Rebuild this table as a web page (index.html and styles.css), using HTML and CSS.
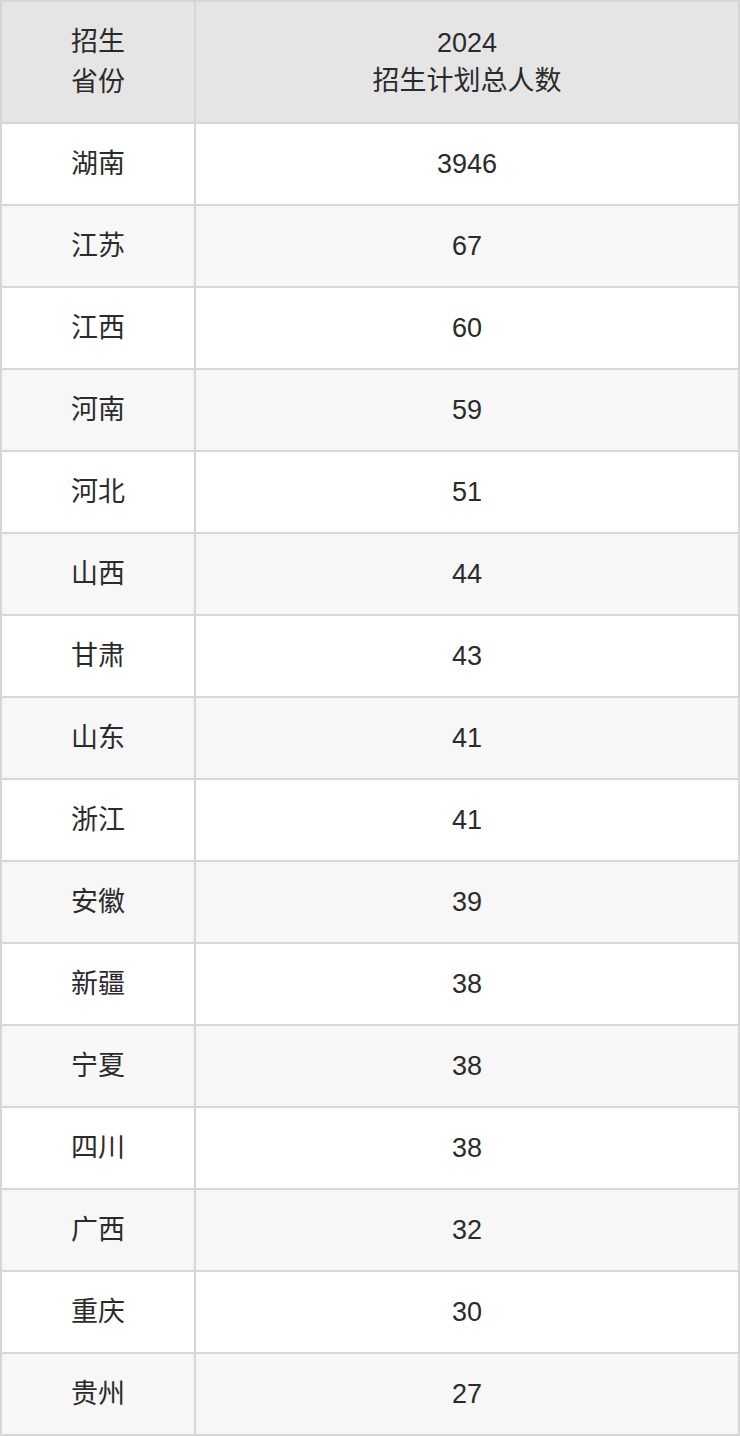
FILE: index.html
```html
<!DOCTYPE html>
<html lang="zh-CN">
<head>
<meta charset="utf-8">
<title>招生计划</title>
<link rel="stylesheet" href="styles.css">
</head>
<body>
<table class="plan">
  <thead>
    <tr><th class="prov">招生<br>省份</th><th class="num">2024<br>招生计划总人数</th></tr>
  </thead>
  <tbody>
    <tr><td>湖南</td><td>3946</td></tr>
    <tr><td>江苏</td><td>67</td></tr>
    <tr><td>江西</td><td>60</td></tr>
    <tr><td>河南</td><td>59</td></tr>
    <tr><td>河北</td><td>51</td></tr>
    <tr><td>山西</td><td>44</td></tr>
    <tr><td>甘肃</td><td>43</td></tr>
    <tr><td>山东</td><td>41</td></tr>
    <tr><td>浙江</td><td>41</td></tr>
    <tr><td>安徽</td><td>39</td></tr>
    <tr><td>新疆</td><td>38</td></tr>
    <tr><td>宁夏</td><td>38</td></tr>
    <tr><td>四川</td><td>38</td></tr>
    <tr><td>广西</td><td>32</td></tr>
    <tr><td>重庆</td><td>30</td></tr>
    <tr><td>贵州</td><td>27</td></tr>
  </tbody>
</table>
</body>
</html>
```

FILE: styles.css
```css
html, body {
  margin: 0;
  padding: 0;
  background: #ffffff;
}
.plan {
  width: 740px;
  border-collapse: collapse;
  table-layout: fixed;
  font-family: "Liberation Sans", "Noto Sans CJK SC", sans-serif;
  font-size: 27px;
  color: #2b2b2b;
}
.plan th, .plan td {
  border: 2px solid #d6d6d6;
  text-align: center;
  vertical-align: middle;
  padding: 0;
  font-weight: normal;
}
.plan th {
  background: #e5e5e5;
  height: 120px;
  line-height: 38px;
}
.plan th.prov {
  width: 192px;
  line-height: 40px;
}
.plan td {
  height: 80px;
  line-height: 30px;
}
.plan tbody tr:nth-child(even) td {
  background: #f7f7f7;
}
```
